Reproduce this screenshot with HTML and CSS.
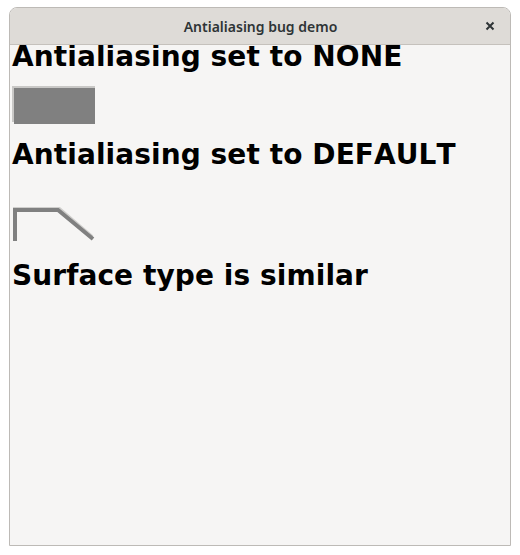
FILE: index.html
```html
<!DOCTYPE html>
<html>
<head>
<meta charset="utf-8">
<link rel="stylesheet" href="styles.css">
</head>
<body>
<div class="window">
  <div class="titlebar">
    <span class="title">Antialiasing bug demo</span>
    <svg class="close" width="10" height="10" viewBox="0 0 10 10">
      <path d="M1.5 1.5 L8.5 8.5 M8.5 1.5 L1.5 8.5" stroke="#2e3436" stroke-width="2" fill="none"/>
    </svg>
  </div>
  <div class="content">
    <h1 class="heading">Antialiasing set to NONE</h1>
    <div class="area area-none">
      <svg width="84" height="38" viewBox="0 0 84 38">
        <rect x="0" y="0" width="83" height="36" fill="#c9c8c6"/>
        <rect x="2" y="2" width="81" height="36" fill="#808080"/>
      </svg>
    </div>
    <h1 class="heading">Antialiasing set to DEFAULT</h1>
    <div class="area area-default">
      <svg width="86" height="36" viewBox="0 0 86 36">
        <polyline points="3,33 3,2 46,2 80,31" fill="none" stroke="#cfcecc" stroke-width="4" transform="translate(0,-1)"/>
        <polyline points="3,34 3,3 46,3 81,32" fill="none" stroke="#808080" stroke-width="4" stroke-linejoin="miter"/>
      </svg>
    </div>
    <h1 class="heading">Surface type is similar</h1>
  </div>
</div>
</body>
</html>
```
FILE: styles.css
```css
html, body {
  margin: 0;
  padding: 0;
  background: #ffffff;
}
body {
  padding: 7px 9px 0 9px;
  width: 502px;
}
.window {
  width: 500px;
  height: 537px;
  border: 1px solid #bdbab6;
  border-radius: 8px 8px 0 0;
  background: #f6f5f4;
  display: flex;
  flex-direction: column;
}
.titlebar {
  height: 36px;
  flex: none;
  background: #dedbd7;
  border-bottom: 1px solid #c5c1bc;
  border-radius: 7px 7px 0 0;
  display: flex;
  align-items: center;
  justify-content: center;
  position: relative;
  font-family: "Noto Sans", "Open Sans", sans-serif;
  font-size: 14px;
  font-weight: 600;
  color: #2e3436;
}
.title {
  margin-left: 1px;
}
.close {
  position: absolute;
  right: 15px;
  top: 13px;
  display: block;
}
.content {
  flex: 1;
  padding-left: 2px;
}
.heading {
  margin: 0;
  font-family: "DejaVu Sans", sans-serif;
  font-weight: bold;
  font-size: 28px;
  line-height: 24px;
  color: #000;
  white-space: nowrap;
  font-kerning: none;
  letter-spacing: 0.08px;
}
.area {
  display: flex;
  align-items: flex-start;
}
.area svg {
  display: block;
}
.area-none {
  height: 74px;
  padding-top: 17px;
  box-sizing: border-box;
}
.area-default {
  height: 97px;
  padding-top: 40px;
  box-sizing: border-box;
}
```
